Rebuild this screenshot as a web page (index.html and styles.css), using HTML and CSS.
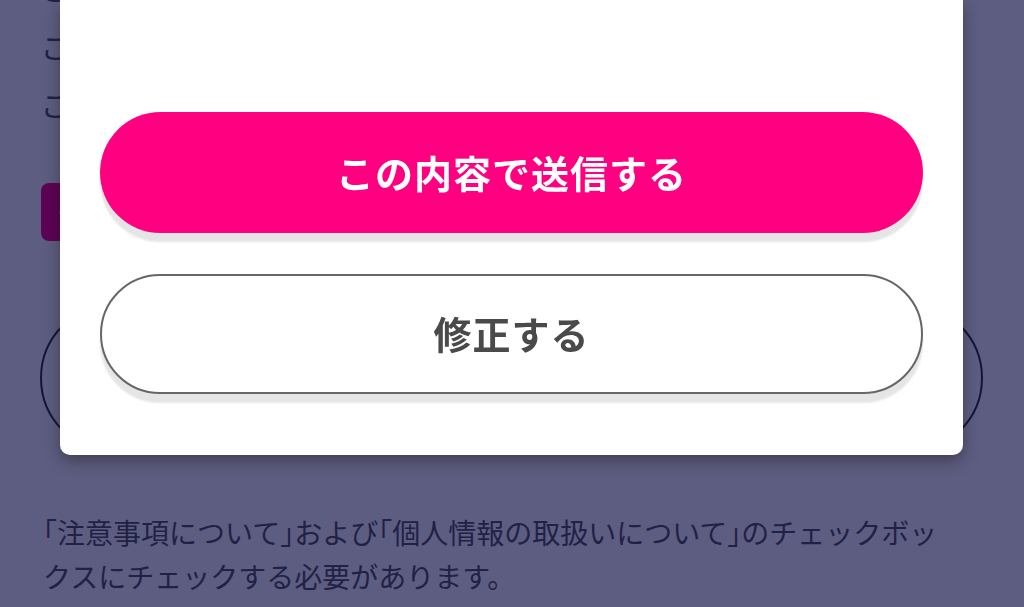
FILE: index.html
```html
<!DOCTYPE html>
<html lang="ja">
<head>
<meta charset="utf-8">
<title>送信確認</title>
<link rel="stylesheet" href="styles.css">
</head>
<body>
<div class="page">
  <p class="intro">ご入力いただいた内容に誤りがないかご確認のうえ送信してください。<br>ご不明な点がございましたらお問い合わせ窓口までご連絡ください。<br>ご確認ありがとうございます。</p>
  <div class="agree">
    <span class="checkbox"><svg viewBox="0 0 24 24" width="30" height="30"><path d="M5 12.5l4.5 4.5L19 7.5" fill="none" stroke="#fff" stroke-width="3" stroke-linecap="round" stroke-linejoin="round"/></svg></span>
  </div>
  <button class="back-btn" type="button" aria-label="入力画面に戻る"></button>
  <p class="note">「注意事項について」および「個人情報の取扱いについて」のチェックボッ<br>クスにチェックする必要があります。</p>
</div>
<div class="overlay"></div>
<div class="modal">
  <button class="btn btn-primary" type="button">この内容で送信する</button>
  <button class="btn btn-outline" type="button">修正する</button>
</div>
</body>
</html>
```

FILE: styles.css
```css
* { box-sizing: border-box; }
html, body {
  margin: 0;
  padding: 0;
  width: 1024px;
  height: 607px;
  overflow: hidden;
  background: #ffffff;
  font-family: "Noto Sans CJK JP", "Noto Sans", sans-serif;
}
.page {
  padding: 0 41px;
  color: #555555;
}
.intro {
  margin: -41px 0 0;
  font-size: 29px;
  line-height: 58px;
  white-space: nowrap;
  overflow: hidden;
}
.agree {
  margin-top: 50px;
  display: flex;
  align-items: center;
  gap: 16px;
  height: 58px;
}
.checkbox {
  width: 58px;
  height: 58px;
  border-radius: 8px;
  background: #ff0080;
  display: flex;
  align-items: center;
  justify-content: center;
}
.back-btn {
  display: block;
  margin: 62px 0 0 -1px;
  width: 943px;
  height: 150px;
  border: 2px solid #333333;
  border-radius: 75px;
  background: #ffffff;
}
.note {
  margin: 57px 0 0 2px;
  font-size: 28px;
  line-height: 44px;
  white-space: nowrap;
  font-feature-settings: "halt" 1;
}
.overlay {
  position: fixed;
  inset: 0;
  background: rgba(6, 6, 61, 0.65);
}
.modal {
  position: fixed;
  top: 0;
  left: 60px;
  width: 903px;
  padding: 112px 40px 61px 40px;
  background: #ffffff;
  border-radius: 0 0 10px 10px;
  box-shadow: 0 6px 16px rgba(0, 0, 0, 0.35);
  display: flex;
  flex-direction: column;
  gap: 41px;
}
.btn {
  display: flex;
  align-items: center;
  justify-content: center;
  width: 100%;
  border-radius: 61px;
  font-family: "Noto Sans CJK JP", "Noto Sans", sans-serif;
  font-size: 38px;
  font-weight: 700;
  letter-spacing: 1px;
  padding: 0 0 3px;
  cursor: pointer;
}
.btn-primary {
  height: 121px;
  border: none;
  background: #ff0080;
  color: #ffffff;
  box-shadow: 0 9px 2px rgba(0, 0, 0, 0.1);
}
.btn-outline {
  height: 120px;
  border: 2px solid #666666;
  background: #ffffff;
  color: #4a4a4a;
  box-shadow: 0 9px 2px rgba(0, 0, 0, 0.1);
}
```
